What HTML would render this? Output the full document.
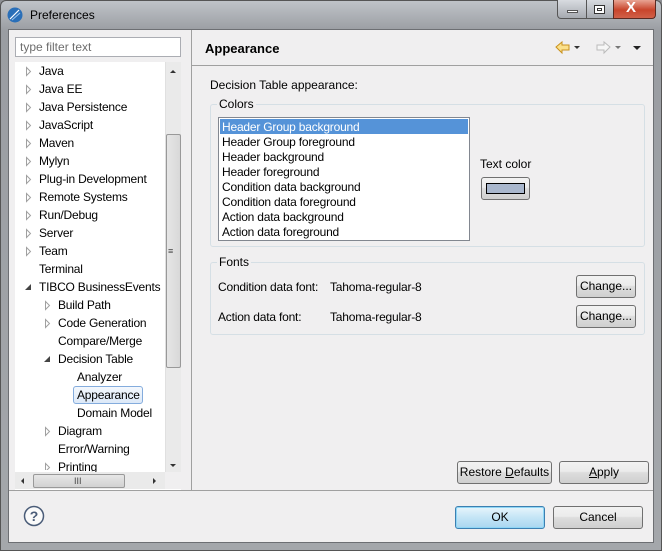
<!DOCTYPE html>
<html><head><meta charset="utf-8"><style>
*{box-sizing:border-box;margin:0;padding:0}
html,body{width:662px;height:551px;overflow:hidden}
body{font-family:"Liberation Sans",sans-serif;font-size:12px;color:#000;background:#8d8f93;position:relative}
.a{position:absolute}
.frame{left:0;top:0;width:662px;height:551px;background:linear-gradient(#bfc3c8,#9a9da2 30px,#a4a7ab);border:1px solid #555;border-radius:6px 6px 0 0}
.client{left:8px;top:29px;width:646px;height:514px;background:#f0eff0;border:1px solid #6d6f73}
.t{position:absolute;white-space:nowrap;line-height:14px}
.tr{letter-spacing:-0.2px}
.btn{position:absolute;border:1px solid #707070;border-radius:3px;background:linear-gradient(#f2f2f2 0%,#ebebeb 45%,#dddddd 50%,#cfcfcf 100%);text-align:center;line-height:20px}
.grp{position:absolute;border:1px solid #d5dfe5;border-radius:3px}
</style></head><body>
<div class="a frame"></div>
<svg class="a" style="left:7px;top:6px" width="18" height="18"><circle cx="8" cy="9" r="7.5" fill="#2a6fb8"/><path d="M3 13 L12 4" stroke="#fff" stroke-width="1.2"/><path d="M5 14 L13 7" stroke="#9cc3ea" stroke-width="1"/></svg>
<div class="t" style="left:30px;top:8px;font-size:12px">Preferences</div>
<div class="a" style="left:557px;top:0;width:30px;height:19px;border:1px solid #555;border-top:none;border-radius:0 0 0 4px;background:linear-gradient(#d8dbe0,#a6aab0)"></div>
<div class="a" style="left:567px;top:10px;width:11px;height:3px;background:#fff;border:1px solid #555"></div>
<div class="a" style="left:587px;top:0;width:26px;height:19px;border-bottom:1px solid #555;background:linear-gradient(#d8dbe0,#a6aab0)"></div>
<div class="a" style="left:594px;top:5px;width:11px;height:9px;border:1px solid #333;background:#fff"><div class="a" style="left:2px;top:2px;width:5px;height:3px;border:1px solid #333"></div></div>
<div class="a" style="left:613px;top:0;width:43px;height:19px;border:1px solid #5a2a22;border-top:none;border-radius:0 0 4px 0;background:linear-gradient(#e8a493,#c8452c 55%,#d06048)"></div>
<div class="t" style="left:626px;top:1px;color:#fff;font-weight:bold;font-size:15px">X</div>
<div class="a client"></div>
<div class="a" style="left:15px;top:37px;width:166px;height:20px;border:1px solid #abadb3;background:#fff"></div>
<div class="t" style="left:20px;top:40px;color:#6d6d6d">type filter text</div>
<div class="a" style="left:15px;top:62px;width:166px;height:428px;background:#fff"></div>
<div class="a" style="left:191px;top:30px;width:1px;height:460px;background:#a0a0a0"></div>
<!-- tree -->
<div class="a" style="left:15px;top:62px;width:150px;height:410px;overflow:hidden">
<div style="position:absolute;left:-15px;top:-62px;width:180px;height:470px">
<div class="a" style="left:73px;top:386px;width:70px;height:18px;border:1px solid #84acdd;border-radius:3px;background:linear-gradient(#f4f8fd,#dce9f8)"></div>
<svg class="a" style="left:0;top:0" width="60" height="470" fill="#fff" stroke="#a0a0a0">
<path d="M26.5 67.5 L30.5 71.5 L26.5 75.5Z"/>
<path d="M26.5 85.5 L30.5 89.5 L26.5 93.5Z"/>
<path d="M26.5 103.5 L30.5 107.5 L26.5 111.5Z"/>
<path d="M26.5 121.5 L30.5 125.5 L26.5 129.5Z"/>
<path d="M26.5 139.5 L30.5 143.5 L26.5 147.5Z"/>
<path d="M26.5 157.5 L30.5 161.5 L26.5 165.5Z"/>
<path d="M26.5 175.5 L30.5 179.5 L26.5 183.5Z"/>
<path d="M26.5 193.5 L30.5 197.5 L26.5 201.5Z"/>
<path d="M26.5 211.5 L30.5 215.5 L26.5 219.5Z"/>
<path d="M26.5 229.5 L30.5 233.5 L26.5 237.5Z"/>
<path d="M26.5 247.5 L30.5 251.5 L26.5 255.5Z"/>
<path d="M45.5 301.5 L49.5 305.5 L45.5 309.5Z"/>
<path d="M45.5 319.5 L49.5 323.5 L45.5 327.5Z"/>
<path d="M45.5 427.5 L49.5 431.5 L45.5 435.5Z"/>
<path d="M45.5 463.5 L49.5 467.5 L45.5 471.5Z"/>
<path d="M31 284 L31 290 L25 290Z" fill="#444" stroke="none"/>
<path d="M50 356 L50 362 L44 362Z" fill="#444" stroke="none"/>
</svg>
<div class="t tr" style="left:39px;top:64px">Java</div>
<div class="t tr" style="left:39px;top:82px">Java EE</div>
<div class="t tr" style="left:39px;top:100px">Java Persistence</div>
<div class="t tr" style="left:39px;top:118px">JavaScript</div>
<div class="t tr" style="left:39px;top:136px">Maven</div>
<div class="t tr" style="left:39px;top:154px">Mylyn</div>
<div class="t tr" style="left:39px;top:172px">Plug-in Development</div>
<div class="t tr" style="left:39px;top:190px">Remote Systems</div>
<div class="t tr" style="left:39px;top:208px">Run/Debug</div>
<div class="t tr" style="left:39px;top:226px">Server</div>
<div class="t tr" style="left:39px;top:244px">Team</div>
<div class="t tr" style="left:39px;top:262px">Terminal</div>
<div class="t tr" style="left:39px;top:280px">TIBCO BusinessEvents</div>
<div class="t tr" style="left:58px;top:298px">Build Path</div>
<div class="t tr" style="left:58px;top:316px">Code Generation</div>
<div class="t tr" style="left:58px;top:334px">Compare/Merge</div>
<div class="t tr" style="left:58px;top:352px">Decision Table</div>
<div class="t tr" style="left:77px;top:370px">Analyzer</div>
<div class="t tr" style="left:77px;top:388px">Appearance</div>
<div class="t tr" style="left:77px;top:406px">Domain Model</div>
<div class="t tr" style="left:58px;top:424px">Diagram</div>
<div class="t tr" style="left:58px;top:442px">Error/Warning</div>
<div class="t tr" style="left:58px;top:460px">Printing</div>
</div></div>
<!-- vscroll -->
<div class="a" style="left:165px;top:62px;width:16px;height:410px;background:#eaeaea;border-left:1px solid #e0e0e0"></div>
<div class="a" style="left:166px;top:134px;width:15px;height:234px;border:1px solid #999;border-radius:2px;background:linear-gradient(90deg,#e6e6e6,#d8d8d8)"></div>
<div class="t" style="left:168px;top:244px;font-size:9px;color:#444">≡</div>
<div class="a" style="left:170px;top:70px;border-left:3px solid transparent;border-right:3px solid transparent;border-bottom:3px solid #333"></div>
<div class="a" style="left:170px;top:464px;border-left:3px solid transparent;border-right:3px solid transparent;border-top:3px solid #333"></div>
<!-- hscroll -->
<div class="a" style="left:15px;top:472px;width:150px;height:17px;background:#eaeaea"></div>
<div class="a" style="left:33px;top:474px;width:92px;height:14px;border:1px solid #999;border-radius:2px;background:linear-gradient(#e6e6e6,#d2d2d2)"></div>
<div class="t" style="left:74px;top:474px;font-size:9px;color:#444">III</div>
<div class="a" style="left:21px;top:478px;border-top:3px solid transparent;border-bottom:3px solid transparent;border-right:3px solid #333"></div>
<div class="a" style="left:153px;top:478px;border-top:3px solid transparent;border-bottom:3px solid transparent;border-left:3px solid #333"></div>
<div class="a" style="left:165px;top:472px;width:16px;height:17px;background:#f0eff0"></div>
<!-- right header -->
<div class="t" style="left:205px;top:42px;font-weight:bold;font-size:13px">Appearance</div>
<div class="a" style="left:192px;top:65px;width:461px;height:1px;background:#a0a0a0"></div>
<svg class="a" style="left:554px;top:40px" width="95" height="16">
<path d="M2 7 L8 2 L8 5 L15 5 L15 10 L8 10 L8 13 Z" fill="#fbe08a" stroke="#c9911d"/>
<path d="M20 6 L26 6 L23 9 Z" fill="#333"/>
<path d="M56 7 L50 2 L50 5 L43 5 L43 10 L50 10 L50 13 Z" fill="#f6f6f6" stroke="#bbb"/>
<path d="M61 6 L67 6 L64 9 Z" fill="#777"/>
<path d="M79 6 L87 6 L83 10 Z" fill="#222"/>
</svg>
<div class="t" style="left:210px;top:78px">Decision Table appearance:</div>
<div class="grp" style="left:210px;top:104px;width:435px;height:143px"></div>
<div class="t" style="left:217px;top:97px;background:#f0eff0;padding:0 2px">Colors</div>
<div class="a" style="left:218px;top:117px;width:252px;height:124px;border:1px solid #828790;background:#fff"></div>
<div class="a" style="left:220px;top:119px;width:248px;height:15px;background:#5593d8"></div>
<div class="t tr" style="left:222px;top:120px;color:#fff">Header Group background</div>
<div class="t tr" style="left:222px;top:135px">Header Group foreground</div>
<div class="t tr" style="left:222px;top:150px">Header background</div>
<div class="t tr" style="left:222px;top:165px">Header foreground</div>
<div class="t tr" style="left:222px;top:180px">Condition data background</div>
<div class="t tr" style="left:222px;top:195px">Condition data foreground</div>
<div class="t tr" style="left:222px;top:210px">Action data background</div>
<div class="t tr" style="left:222px;top:225px">Action data foreground</div>
<div class="t" style="left:480px;top:157px">Text color</div>
<div class="btn" style="left:481px;top:177px;width:49px;height:23px"></div>
<div class="a" style="left:486px;top:183px;width:39px;height:11px;border:1px solid #000;background:#a9b7cd"></div>
<div class="grp" style="left:210px;top:262px;width:435px;height:73px"></div>
<div class="t" style="left:217px;top:255px;background:#f0eff0;padding:0 2px">Fonts</div>
<div class="t tr" style="left:218px;top:280px">Condition data font:</div>
<div class="t tr" style="left:330px;top:280px">Tahoma-regular-8</div>
<div class="t tr" style="left:218px;top:310px">Action data font:</div>
<div class="t tr" style="left:330px;top:310px">Tahoma-regular-8</div>
<div class="btn" style="left:576px;top:275px;width:60px;height:23px">Change...</div>
<div class="btn" style="left:576px;top:305px;width:60px;height:23px">Change...</div>
<div class="btn" style="left:457px;top:461px;width:95px;height:23px">Restore <u>D</u>efaults</div>
<div class="btn" style="left:559px;top:461px;width:90px;height:23px"><u>A</u>pply</div>
<div class="a" style="left:9px;top:490px;width:644px;height:1px;background:#a0a0a0"></div>
<svg class="a" style="left:23px;top:505px" width="22" height="22"><circle cx="11" cy="11" r="9.5" fill="#fafafa" stroke="#4a5c78" stroke-width="1.5"/><text x="11" y="16" text-anchor="middle" font-family="Liberation Sans" font-weight="bold" font-size="14" fill="#4a5c78">?</text></svg>
<div class="btn" style="left:455px;top:506px;width:90px;height:23px;border-color:#3c7fb1;background:linear-gradient(#e8f5fc,#c4e5f6 50%,#a9d6f0);box-shadow:inset 0 0 0 1px #8fd6f5">OK</div>
<div class="btn" style="left:553px;top:506px;width:90px;height:23px">Cancel</div>
</body></html>
